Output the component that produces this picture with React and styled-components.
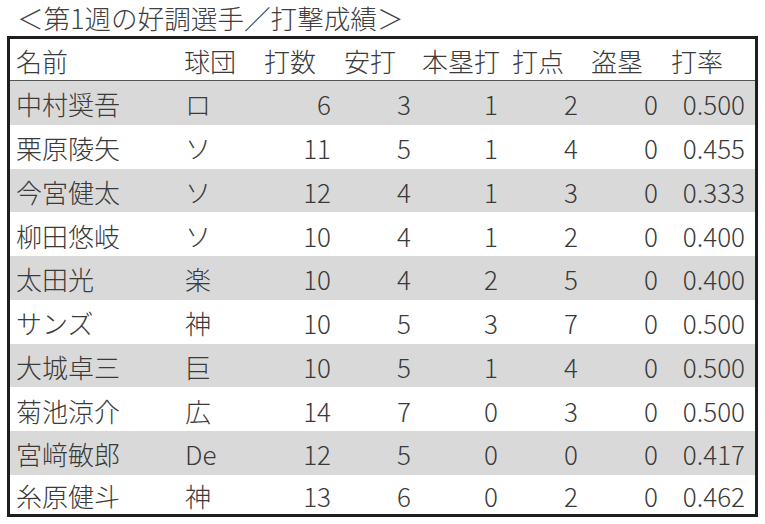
import React from "react";
import styled, { createGlobalStyle } from "styled-components";

const Global = createGlobalStyle`
  html, body { margin: 0; padding: 0; background: #ffffff; }
  body { font-family: "Noto Sans CJK JP", "Noto Sans", sans-serif; color: #3a3a3a; }
`;

const Page = styled.div`
  width: 765px;
  height: 524px;
  overflow: hidden;
  padding-left: 7px;
  box-sizing: border-box;
`;

const Title = styled.div`
  height: 36px;
  font-size: 26.6px;
  font-weight: 300;
  line-height: 35px;
  padding-left: 10px;
  color: #404040;
  white-space: nowrap;
`;

const Table = styled.div`
  width: 751px;
  border: 3px solid #1e1e1e;
  box-sizing: border-box;
  height: 481px;
  overflow: hidden;
`;

const COLS = "172px 80px 80px 80px 90px 77px 80px 1fr";

const Row = styled.div`
  display: grid;
  grid-template-columns: ${COLS};
  height: ${(p) => p.$h}px;
  background: ${(p) => (p.$shade ? "#d9d9d9" : "#ffffff")};
  border-bottom: ${(p) => (p.$head ? "1px solid #555555" : "none")};
  box-sizing: border-box;
`;

const Cell = styled.div`
  display: flex;
  align-items: center;
  justify-content: ${(p) => (p.$right ? "flex-end" : "flex-start")};
  padding-left: ${(p) => p.$pl || 0}px;
  padding-right: ${(p) => p.$pr || 0}px;
  padding-top: ${(p) => (p.$head ? 2 : 3)}px;
  font-size: 26px;
  font-weight: 300;
  line-height: 1;
  white-space: nowrap;
  color: #3a3a3a;
`;

const headers = ["名前", "球団", "打数", "安打", "本塁打", "打点", "盗塁", "打率"];
const data = [
  ["中村奨吾", "ロ", 6, 3, 1, 2, 0, "0.500"],
  ["栗原陵矢", "ソ", 11, 5, 1, 4, 0, "0.455"],
  ["今宮健太", "ソ", 12, 4, 1, 3, 0, "0.333"],
  ["柳田悠岐", "ソ", 10, 4, 1, 2, 0, "0.400"],
  ["太田光", "楽", 10, 4, 2, 5, 0, "0.400"],
  ["サンズ", "神", 10, 5, 3, 7, 0, "0.500"],
  ["大城卓三", "巨", 10, 5, 1, 4, 0, "0.500"],
  ["菊池涼介", "広", 14, 7, 0, 3, 0, "0.500"],
  ["宮﨑敏郎", "De", 12, 5, 0, 0, 0, "0.417"],
  ["糸原健斗", "神", 13, 6, 0, 2, 0, "0.462"],
];
const rightPad = [0, 0, 11, 11, 14, 11, 11, 10];
const headPad = [6, 2, 2, 2, 0, 0, 2, 2];

export default function App() {
  return (
    <Page>
      <Global />
      <Title>＜第1週の好調選手／打撃成績＞</Title>
      <Table>
        <Row $h={42} $head>
          {headers.map((h, i) => (
            <Cell key={h} $head $pl={headPad[i]}>
              {h}
            </Cell>
          ))}
        </Row>
        {data.map((r, ri) => (
          <Row key={r[0]} $h={ri === data.length - 1 ? 40 : 43.75} $shade={ri % 2 === 0}>
            {r.map((v, ci) =>
              ci < 2 ? (
                <Cell key={ci} $pl={ci === 0 ? 6 : 3}>
                  {v}
                </Cell>
              ) : (
                <Cell key={ci} $right $pr={rightPad[ci]}>
                  {v}
                </Cell>
              )
            )}
          </Row>
        ))}
      </Table>
    </Page>
  );
}
